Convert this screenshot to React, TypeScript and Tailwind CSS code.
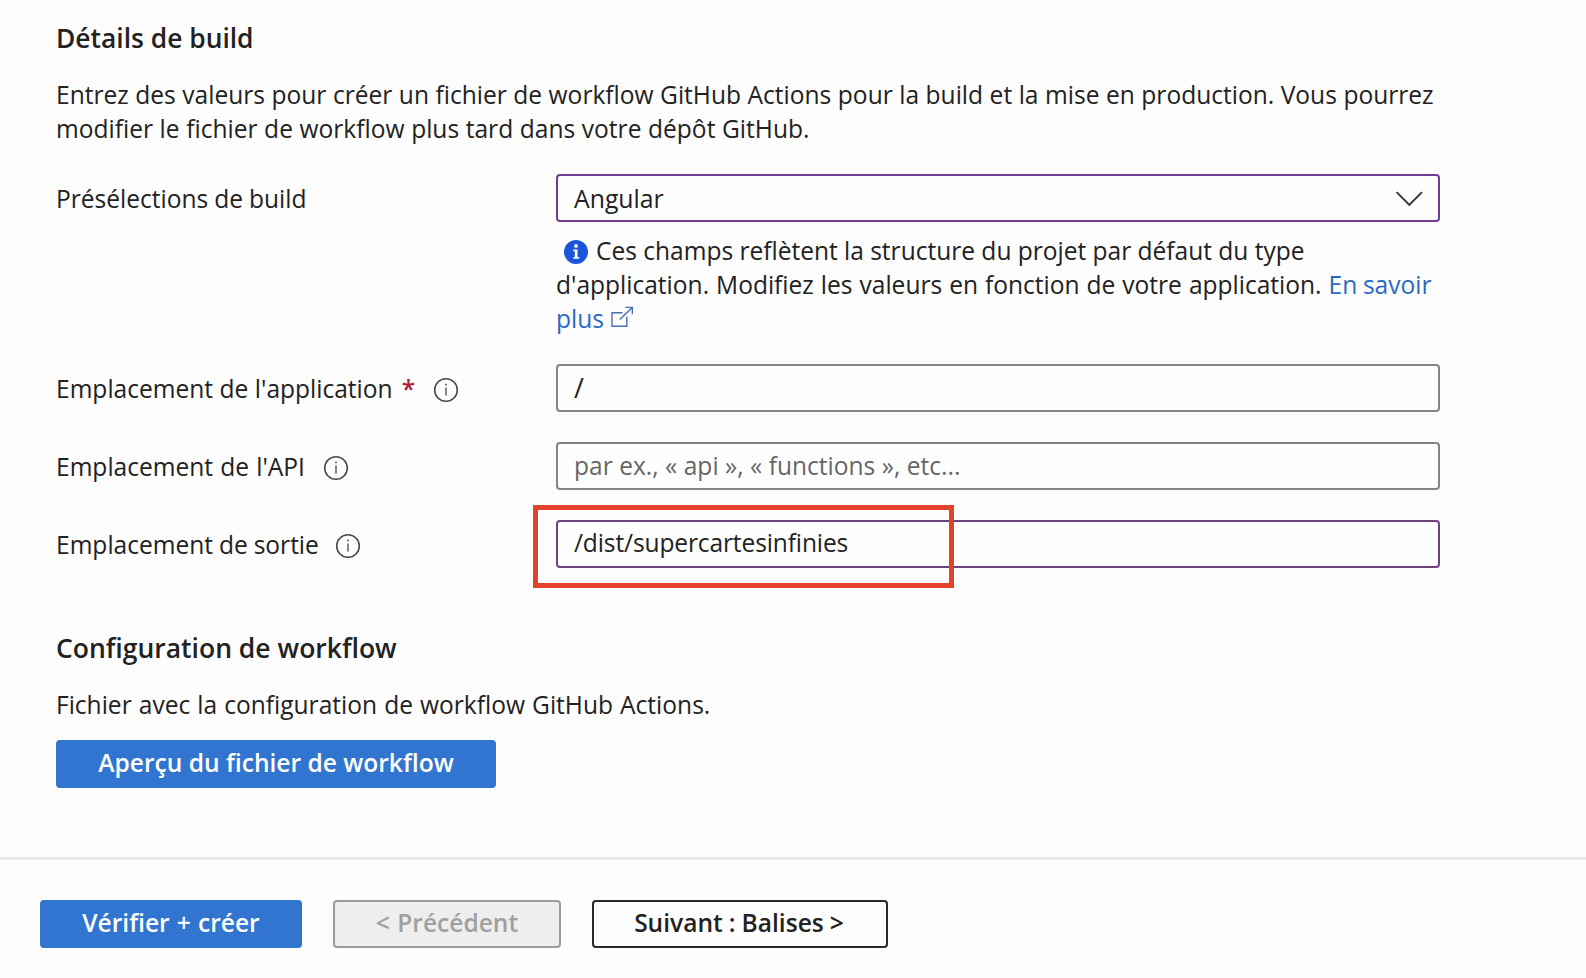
import type { ReactNode } from "react";

function InfoOutline({ className }: { className: string }) {
  return (
    <svg viewBox="0 0 26 26" className={`mt-px size-[26px] shrink-0 ${className}`} fill="none">
      <circle cx="13" cy="13" r="11.3" stroke="#4a4a4a" strokeWidth="1.6" />
      <path d="M13 10.6v8" stroke="#5c5c5c" strokeWidth="1.5" />
      <circle cx="13" cy="7.6" r="1" fill="#5c5c5c" />
    </svg>
  );
}

function InfoFilled() {
  return (
    <svg viewBox="0 0 24 24" className="mr-2 ml-2 inline-block size-6 align-[-4px]">
      <circle cx="12" cy="12" r="12" fill="#1b55d9" />
      <circle cx="12" cy="5.9" r="1.9" fill="#fff" />
      <path d="M9.3 9.6h4.2v7.6h1.7v1.6H9.1v-1.6h1.7v-6H9.3z" fill="#fff" />
    </svg>
  );
}

function ExternalLink() {
  return (
    <svg viewBox="0 0 24 22" className="ml-[6px] inline-block h-[22px] w-6 align-[0px]" fill="none" stroke="#4a6fae" strokeWidth="1.4">
      <path d="M12.5 6.7H2v13.6h14.8V10.8" />
      <path d="M9.8 13.6 22.2 1.4M15.4 1.4h6.9v6.8" />
    </svg>
  );
}

function Row({ label, children }: { label: ReactNode; children: ReactNode }) {
  return (
    <div className="flex h-12 items-center">
      <div className="flex w-[500px] shrink-0 items-center pt-[2px] whitespace-nowrap">{label}</div>
      {children}
    </div>
  );
}

const field = "flex h-12 w-[884px] items-center rounded-[4px] border-2 bg-[#fefefe] pr-[15px] pl-4";

export default function App() {
  return (
    <div className="flex h-[978px] w-[1586px] flex-col overflow-hidden bg-[#fdfdfd] font-['Open_Sans','Noto_Sans',sans-serif] text-[24.56px] leading-[34px] whitespace-nowrap text-[#222]">
      <main className="flex h-[857px] flex-col pt-[21px] pl-14">
        <h2 className="text-[26.4px] font-semibold">Détails de build</h2>
        <p className="mt-[23px]">
          <span className="[word-spacing:0.15px]">
            Entrez des valeurs pour créer un fichier de workflow GitHub Actions pour la build et la mise en production. Vous pourrez
          </span>
          <br />
          <span className="[word-spacing:0.25px]">modifier le fichier de workflow plus tard dans votre dépôt GitHub.</span>
        </p>

        <div className="mt-7">
          <Row label={<span className="[word-spacing:-0.4px]">Présélections de build</span>}>
            <div className={`${field} justify-between border-[#733c94]`}>
              <span className="text-[24.8px]">Angular</span>
              <svg viewBox="0 0 28 16" className="mt-[2px] h-4 w-7" fill="none" stroke="#333" strokeWidth="1.9">
                <path d="M1.6 1.2 14.3 14 27 1.2" />
              </svg>
            </div>
          </Row>
          <p className="mt-3 ml-[500px]">
            <InfoFilled />
            <span className="[word-spacing:-0.1px]">Ces champs reflètent la structure du projet par défaut du type</span>
            <br />
            <span className="[word-spacing:0.6px]">d'application. Modifiez les valeurs en fonction de votre application. </span>
            <a className="text-[#2a6ac6] [word-spacing:-0.7px]">
              En savoir
              <br />
              plus
              <ExternalLink />
            </a>
          </p>
        </div>

        <div className="mt-7 flex flex-col gap-[30px]">
          <Row
            label={
              <>
                <span className="[word-spacing:0.1px]">Emplacement de l'application</span>
                <span className="ml-[9px] font-semibold text-[#a8203a]">*</span>
                <InfoOutline className="ml-[18px]" />
              </>
            }
          >
            <div className={`${field} border-[#848484]`}>
              <span className="origin-left scale-110">/</span>
            </div>
          </Row>
          <Row
            label={
              <>
                <span className="[word-spacing:0.8px]">Emplacement de l'API</span>
                <InfoOutline className="ml-[18px]" />
              </>
            }
          >
            <div className={`${field} border-[#848484] text-[#666]`}>
              <span className="[word-spacing:0.1px]">par ex., « api », « functions », etc...</span>
            </div>
          </Row>
          <div className="relative">
            <Row
              label={
                <>
                  <span className="[word-spacing:-0.5px]">Emplacement de sortie</span>
                  <InfoOutline className="ml-4" />
                </>
              }
            >
              <div className={`${field} border-[#6a4380] pb-[3px] tracking-[-0.13px]`}>/dist/supercartesinfinies</div>
            </Row>
            <div className="absolute -top-[15px] left-[477px] h-[83px] w-[421px] border-[5px] border-[#e2412a]" />
          </div>
        </div>

        <h2 className="mt-[63px] text-[26.5px] font-semibold">Configuration de workflow</h2>
        <p className="mt-[23px] [word-spacing:0.7px]">Fichier avec la configuration de workflow GitHub Actions.</p>
        <button className="mt-[18px] flex h-12 w-[440px] shrink-0 items-center justify-center rounded-[4px] bg-[#3175d0] pb-[2px] font-semibold text-white">
          Aperçu du fichier de workflow
        </button>
      </main>

      <footer className="flex h-[121px] items-start border-t-[3px] border-[#e9e9e9] pt-10 pl-10 font-semibold">
        <button className="flex h-12 w-[262px] items-center justify-center rounded-[4px] bg-[#3175d0] pb-[2px] text-white [word-spacing:0.8px]">
          Vérifier + créer
        </button>
        <button className="ml-[31px] flex h-12 w-[228px] items-center justify-center rounded-[4px] border-2 border-[#9b9b9b] bg-[#eeeeee] pb-[2px] text-[#a0a0a0] [word-spacing:1px]">
          &lt; Précédent
        </button>
        <button className="ml-[31px] flex h-12 w-[296px] items-center justify-center rounded-[4px] border-2 border-[#2a2a2a] bg-[#fefefe] pr-[2px] pb-[2px] [word-spacing:-0.3px]">
          Suivant : Balises &gt;
        </button>
      </footer>
    </div>
  );
}
